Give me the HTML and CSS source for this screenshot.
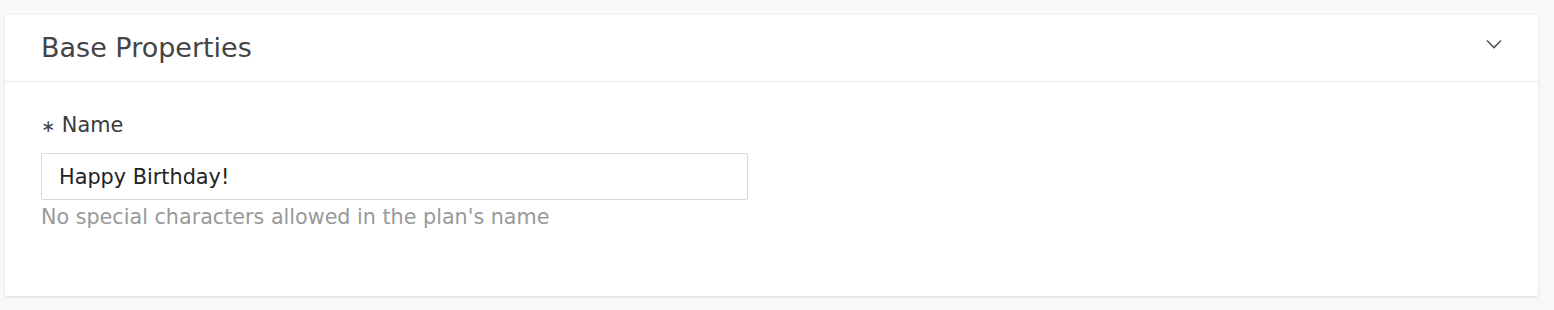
FILE: index.html
```html
<!DOCTYPE html>
<html lang="en">
<head>
<meta charset="utf-8">
<title>Base Properties</title>
<link rel="stylesheet" href="styles.css">
</head>
<body>
<section class="card">
  <header class="card-header">
    <h2 class="card-title">Base Properties</h2>
    <button class="toggle" aria-label="Collapse">
      <svg width="16" height="10" viewBox="0 0 16 10"><path d="M1 1.5 L8 8.5 L15 1.5" fill="none" stroke="#555" stroke-width="1.6"/></svg>
    </button>
  </header>
  <div class="card-body">
    <label class="field-label" for="name"><span class="req">∗</span> Name</label>
    <input id="name" class="field-input" type="text" value="Happy Birthday!">
    <div class="field-help">No special characters allowed in the plan's name</div>
  </div>
</section>
</body>
</html>
```
FILE: styles.css
```css
html, body {
  margin: 0;
  padding: 0;
  background: #f8f8f8;
}
body {
  padding: 15px 16px 14px 5px;
  font-family: "DejaVu Sans", "Open Sans", sans-serif;
  color: #333;
}
.card {
  background: #fff;
  border-radius: 3px;
  box-shadow: 0 1px 3px rgba(0,0,0,0.12);
  height: 281px;
  display: flex;
  flex-direction: column;
}
.card-header {
  height: 67px;
  border-bottom: 1px solid #ebebeb;
  display: flex;
  align-items: center;
  justify-content: space-between;
  padding: 0 36px 0 36px;
  box-sizing: border-box;
}
.card-title {
  margin: 0;
  font-weight: 400;
  font-size: 27px;
  line-height: 32px;
  color: #444;
}
.toggle {
  background: none;
  border: 0;
  padding: 0;
  margin-top: -8px;
  width: 16px;
  height: 10px;
  display: flex;
}
.card-body {
  padding: 30px 36px 0 36px;
  display: flex;
  flex-direction: column;
  align-items: flex-start;
}
.field-label {
  font-size: 20.8px;
  color: #3a3a3a;
  line-height: 26px;
  margin-bottom: 14px;
}
.req {
  color: #444;
  font-size: 17px;
}
.field-input {
  width: 707px;
  height: 47px;
  box-sizing: border-box;
  border: 1px solid #d9d9d9;
  border-radius: 2px;
  padding: 0 17px;
  font-family: inherit;
  font-size: 20.8px;
  color: #222;
  outline: none;
}
.field-help {
  font-size: 20.7px;
  color: #999;
  line-height: 26px;
  margin-top: 4px;
}
```
